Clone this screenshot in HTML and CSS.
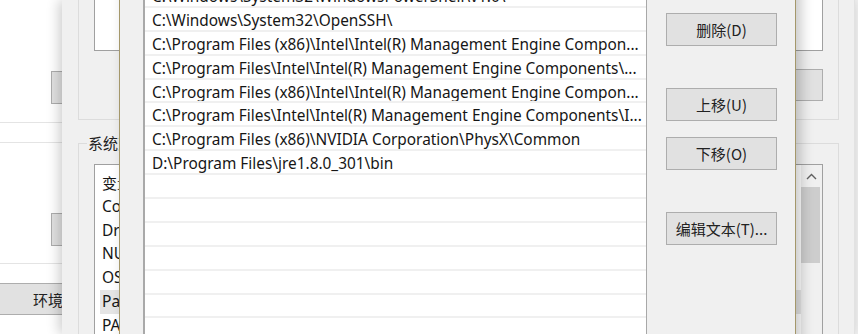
FILE: index.html
```html
<!DOCTYPE html>
<html lang="zh-CN">
<head>
<meta charset="utf-8">
<title>编辑环境变量</title>
<link rel="stylesheet" href="styles.css">
</head>
<body>
<div class="desk">
  <section class="win win-a">
    <div class="a-btn"></div>
    <div class="a-rule a-rule-1"></div>
    <div class="a-rule a-rule-2"></div>
    <div class="a-btn a-btn-2"></div>
    <div class="a-rule a-rule-3"></div>
    <div class="a-wide">环境变量(N)...</div>
  </section>

  <section class="win win-b">
    <div class="grp-user">
      <div class="user-list"></div>
      <div class="user-btns"><button class="wbtn">删除(L)</button></div>
    </div>
    <fieldset class="grp-sys">
      <legend>系统变量(S)</legend>
      <div class="sys-list">
        <div class="sys-rows">
          <div class="sys-row">变量</div>
          <div class="sys-row">ComSpec</div>
          <div class="sys-row">DriverData</div>
          <div class="sys-row">NUMBER_OF_PROCESSORS</div>
          <div class="sys-row">OS</div>
          <div class="sys-row sel">Path</div>
          <div class="sys-row">PATHEXT</div>
        </div>
        <div class="vscroll">
          <div class="vs-up"><svg width="11" height="7" viewBox="0 0 11 7"><polyline points="1,6 5.5,1.5 10,6" fill="none" stroke="#606060" stroke-width="1.4"/></svg></div>
          <div class="vs-thumb"></div>
        </div>
      </div>
    </fieldset>
  </section>

  <section class="win win-c">
    <div class="path-list">
      <div class="prow">C:\Windows\System32\WindowsPowerShell\v1.0\</div>
      <div class="prow">C:\Windows\System32\OpenSSH\</div>
      <div class="prow">C:\Program Files (x86)\Intel\Intel(R) Management Engine Compon...</div>
      <div class="prow">C:\Program Files\Intel\Intel(R) Management Engine Components\...</div>
      <div class="prow">C:\Program Files (x86)\Intel\Intel(R) Management Engine Compon...</div>
      <div class="prow">C:\Program Files\Intel\Intel(R) Management Engine Components\I...</div>
      <div class="prow">C:\Program Files (x86)\NVIDIA Corporation\PhysX\Common</div>
      <div class="prow">D:\Program Files\jre1.8.0_301\bin</div>
      <div class="prow"></div>
      <div class="prow"></div>
      <div class="prow"></div>
      <div class="prow"></div>
      <div class="prow"></div>
      <div class="prow"></div>
      <div class="prow"></div>
    </div>
    <div class="c-btns">
      <button class="cbtn">删除(D)</button>
      <button class="cbtn gap-s">上移(U)</button>
      <button class="cbtn gap-t">下移(O)</button>
      <button class="cbtn gap-s">编辑文本(T)...</button>
    </div>
  </section>
</div>
</body>
</html>
```

FILE: styles.css
```css
* { box-sizing: border-box; }
html, body { margin: 0; padding: 0; }
body {
  width: 858px;
  height: 334px;
  overflow: hidden;
  background: #f0f0f0;
  font-family: "Noto Sans", "Noto Sans CJK SC", sans-serif;
  color: #161616;
}
.desk { position: relative; width: 858px; height: 334px; overflow: hidden; }
.win { position: absolute; }

/* back window (left) */
.win-a {
  left: 0; top: 0;
  width: 130px; height: 334px;
  background: #fff;
  padding-top: 71px;
}
.a-btn { margin-left: 51px; height: 33px; background: #e1e1e1; border: 1px solid #adadad; }
.a-rule { height: 1px; background: #e4e4e4; }
.a-rule-1 { margin-top: 18px; }
.a-rule-2 { margin-top: 19px; }
.a-btn-2 { margin-top: 70px; }
.a-rule-3 { margin-top: 17px; }
.a-wide {
  margin-top: 19px;
  height: 32px;
  background: #e1e1e1;
  border: 1px solid #adadad;
  border-left: 0;
  padding-left: 33px;
  font: 15px/31px "Noto Sans CJK SC", sans-serif;
  color: #222;
  white-space: nowrap;
}

/* middle window */
.win-b {
  left: 62px; top: 0;
  width: 793px; height: 334px;
  background: #f0f0f0;
  border-right: 1px solid #e2e2e2;
  box-shadow: -3px 0 12px rgba(0,0,0,.2);
  padding-left: 16px;
  overflow: hidden;
}
.grp-user {
  margin-top: -60px;
  width: 761px; height: 180px;
  border: 1px solid #dcdcdc;
  padding: 0 15px;
}
.user-list { height: 110px; background: #fff; border: 1px solid #a0a0a0; border-top: 0; }
.user-btns { display: flex; justify-content: flex-end; margin-top: 18px; }
.wbtn {
  width: 130px; height: 32px;
  background: #e1e1e1; border: 1px solid #adadad;
  font: 15px "Noto Sans CJK SC", sans-serif; color: #222;
  padding: 0 40px 0 0;
}
.grp-sys {
  margin: 14px 0 0 0;
  width: 761px; height: 260px;
  border: 1px solid #dcdcdc;
  padding: 0 15px 0 8px;
  min-width: 0;
}
.grp-sys legend {
  padding: 0 1px;
  font: 15px/18px "Noto Sans CJK SC", sans-serif;
  color: #222;
}
.sys-list {
  margin: 12px 0 0 7px;
  height: 220px;
  background: #fff;
  border: 1px solid #a0a0a0;
  display: flex;
}
.sys-rows { flex: 1; padding: 6px 0 0 5px; min-width: 0; }
.sys-row {
  height: 23.75px;
  line-height: 23.75px;
  padding-left: 2px;
  font-size: 15.5px;
  white-space: nowrap;
}
.sys-row:first-child { font-family: "Noto Sans CJK SC", sans-serif; font-size: 15px; }
.sys-row.sel { background: #e5e5e5; }
.vscroll { width: 21px; background: #f0f0f0; padding-right: 2px; }
.vs-up { height: 22px; display: flex; justify-content: center; align-items: center; padding-left: 2px; }
.vs-thumb { height: 76px; background: #cdcdcd; }

/* front dialog */
.win-c {
  left: 119px; top: -17px;
  width: 677px; height: 400px;
  background: #f0f0f0;
  border: 1px solid #a4976a;
  box-shadow: 5px 3px 12px rgba(0,0,0,.22);
  display: flex;
  padding: 0 18px 0 23px;
}
.path-list {
  width: 504px;
  background: #fff;
  border-left: 2px solid #a9a9a9;
  border-right: 1px solid #a8a8a8;
}
.prow {
  height: 23.9px;
  border-bottom: 2px solid #f0f0f0;
  padding: 1px 0 0 7px;
  line-height: 23px;
  font-size: 15.4px;
  white-space: nowrap;
  overflow: hidden;
}
.c-btns {
  margin-left: 19px;
  width: 111px;
  display: flex;
  flex-direction: column;
  padding-top: 29px;
}
.cbtn {
  height: 33px;
  width: 111px;
  background: #e1e1e1;
  border: 1px solid #adadad;
  font: 15px "Noto Sans CJK SC", sans-serif;
  color: #222;
  padding: 0;
  flex: none;
}
.gap-s { margin-top: 42px; }
.gap-t { margin-top: 16px; }
```
